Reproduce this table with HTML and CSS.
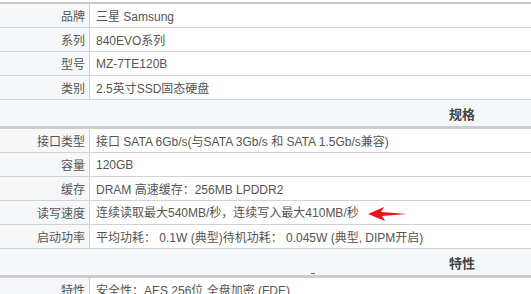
FILE: index.html
```html
<!DOCTYPE html>
<html lang="zh-CN">
<head>
    <meta charset="UTF-8">
    <title>三星 840EVO 参数</title>
    <link rel="stylesheet" href="styles.css">
</head>
<body>

    <!-- 参数表 -->
    <table class="spec">
        <tr><th>品牌</th><td>三星 Samsung</td></tr>
        <tr><th>系列</th><td>840EVO系列</td></tr>
        <tr><th>型号</th><td>MZ-7TE120B</td></tr>
        <tr><th>类别</th><td>2.5英寸SSD固态硬盘</td></tr>

        <tr class="group"><td colspan="2">规格</td></tr>
        <tr><th>接口类型</th><td>接口 SATA 6Gb/s(与SATA 3Gb/s 和 SATA 1.5Gb/s兼容)</td></tr>
        <tr><th>容量</th><td>120GB</td></tr>
        <tr><th>缓存</th><td>DRAM 高速缓存：256MB LPDDR2</td></tr>
        <tr>
            <th>读写速度</th>
            <td>连续读取最大540MB/秒，连续写入最大410MB/秒
                <svg class="arrow" width="40" height="16" viewBox="0 0 40 16">
                    <polygon points="0,8 16,1 13,6 39,8 14,10 17,15" fill="#e8141a"/>
                </svg>
            </td>
        </tr>
        <tr><th>启动功率</th><td>平均功耗： 0.1W (典型)待机功耗： 0.045W (典型, DIPM开启)</td></tr>

        <tr class="group"><td colspan="2">特性<span class="tick"></span></td></tr>
        <tr><th>特性</th><td>安全性：AES 256位 全盘加密 (FDE)</td></tr>
    </table>

</body>
</html>
```

FILE: styles.css
```css
body {
    margin: 0;
    padding-top: 2px;
    font-family: 'Liberation Sans', Arial, 'Noto Sans CJK SC', sans-serif;
    font-size: 12px;
    color: #555;
    background: #fff;
    overflow: hidden;
}

.spec {
    width: 100%;
    border-collapse: collapse;
    border-top: 2px solid #c9c9c9;
}

.spec th,
.spec td {
    height: 23px;
    padding: 0;
    border-bottom: 1px solid #d2d2d2;
    white-space: nowrap;
}

.spec th {
    width: 85px;
    padding-right: 4px;
    text-align: right;
    font-weight: normal;
    background: #f5f7f9;
    border-right: 1px solid #d2d2d2;
}

.spec td {
    padding-left: 6px;
}

.group td {
    position: relative;
    height: 26px;
    padding: 0 56px 0 0;
    text-align: right;
    font-weight: bold;
    font-size: 13px;
    color: #444;
    background: #f5f8fa;
    border-bottom: 3px solid #cdcdcd;
}

.arrow {
    vertical-align: middle;
    margin-left: 6px;
}

/* small mark on the group line */
.tick {
    position: absolute;
    left: 311px;
    bottom: 1px;
    width: 4px;
    height: 1px;
    background: #666;
}
```
